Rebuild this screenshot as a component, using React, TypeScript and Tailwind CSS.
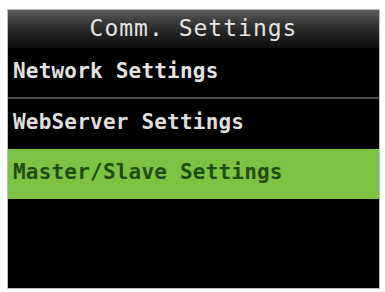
export default function App() {
  const mono = { fontFamily: '"DejaVu Sans Mono", "Liberation Mono", monospace' };
  return (
    <div className="w-[385px] h-[292px] bg-white pl-[7px] pt-[9px]" style={mono}>
      <div className="w-[373px] h-[280px] bg-black border border-[#bdbdbd] flex flex-col">
        <div className="h-[38px] bg-gradient-to-b from-[#5a5a5a] via-[#2a2a2a] to-[#0e0e0e] flex items-center justify-center">
          <span className="text-[23px] leading-none text-[#e4e4e4] tracking-[1px] pb-[2px]">Comm. Settings</span>
        </div>
        <div className="h-[49px] flex items-center px-[5px] pb-[3px]">
          <span className="text-[21px] leading-none font-bold text-[#e2e2e2] tracking-[0.2px]">Network Settings</span>
        </div>
        <div className="h-[2px] bg-[#4a4a4a]" />
        <div className="h-[50px] flex items-center px-[5px] pb-[3px]">
          <span className="text-[21px] leading-none font-bold text-[#dedede] tracking-[0.2px]">WebServer Settings</span>
        </div>
        <div className="h-[50px] bg-[#7cc243] flex items-center px-[5px] pb-[3px]">
          <span className="text-[21px] leading-none font-bold text-[#1f4d12] tracking-[0.2px]">Master/Slave Settings</span>
        </div>
        <div className="flex-1 bg-black" />
      </div>
    </div>
  );
}
